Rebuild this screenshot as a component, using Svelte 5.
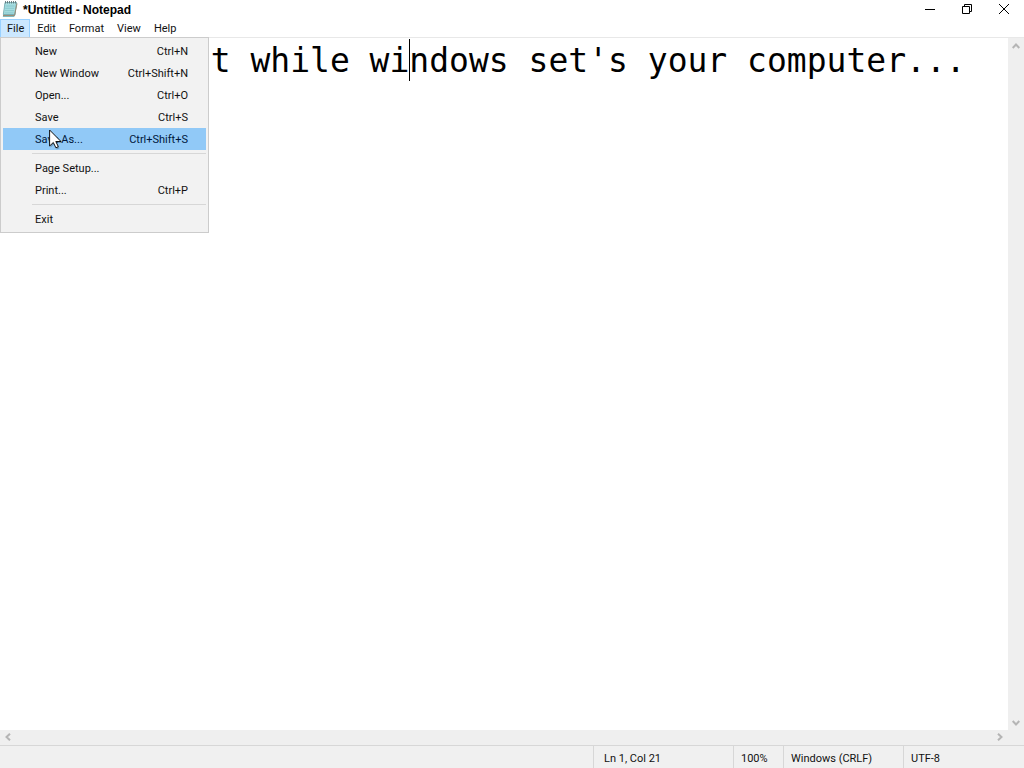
<script>
  const menus = ['File', 'Edit', 'Format', 'View', 'Help'];
  const groups = [
    [
      { label: 'New', keys: 'Ctrl+N' },
      { label: 'New Window', keys: 'Ctrl+Shift+N' },
      { label: 'Open...', keys: 'Ctrl+O' },
      { label: 'Save', keys: 'Ctrl+S' },
      { label: 'Save As...', keys: 'Ctrl+Shift+S' }
    ],
    [
      { label: 'Page Setup...', keys: '' },
      { label: 'Print...', keys: 'Ctrl+P' }
    ],
    [{ label: 'Exit', keys: '' }]
  ];
  let open = $state('File');
  let active = $state('Save As...');
  let text = $state("Please wait while windows set's your computer...");
  const column = 21;
</script>

<div class="window">
  <header class="title">
    <svg class="logo" width="16" height="18" viewBox="0 0 16 18" aria-hidden="true">
      <path d="M3 2.5h12l-1.600 12.500-1.400 2H.8z" fill="#80b9bd" />
      <path d="M3 2.500h11.500l-1.700 12H1.300z" fill="#a5dde0" stroke="#6da3aa" stroke-width=".7" />
      <path d="M1 15.500h11.500L15 3.500" fill="none" stroke="#9a8d78" stroke-width="1" />
      <path d="M3.500 6h9M3.200 8.300h9M2.900 10.600h9M2.600 12.900h9" stroke="#83c3ca" stroke-width=".8" />
      <path d="M3.500 1v2.500M5.500 1v2.500M7.500 1v2.500M9.500 1v2.500M11.500 1v2.500M13.500 1v2.500" stroke="#62777c" stroke-width=".9" />
    </svg>
    <h1>*Untitled - Notepad</h1>
    <div class="controls">
      <button aria-label="Minimize"><svg width="10" height="10" viewBox="0 0 10 10"><path d="M0 5.500h10" /></svg></button>
      <button aria-label="Restore"><svg width="10" height="10" viewBox="0 0 10 10"><path d="M.5 2.500h7v7h-7zM2.500 2.500v-2h7v7h-2" /></svg></button>
      <button aria-label="Close"><svg width="10" height="10" viewBox="0 0 10 10"><path d="M0 0l10 10M10 0L0 10" /></svg></button>
    </div>
  </header>

  <nav class="menubar">
    {#each menus as name}
      <div class="entry">
        <button class="top" class:open={open === name} onclick={() => (open = open === name ? '' : name)}>{name}</button>
        {#if name === 'File' && open === 'File'}
          <div class="menu" role="menu">
            {#each groups as group}
              <div class="group">
                {#each group as item}
                  <button class="item" class:active={active === item.label} role="menuitem" onmouseenter={() => (active = item.label)}>
                    <span>{item.label}</span><span>{item.keys}</span>
                  </button>
                {/each}
              </div>
            {/each}
            <svg class="pointer" width="14" height="22" viewBox="0 0 14 22" aria-hidden="true">
              <path d="M1.500 2.500v16l3.700-3.400 2.600 5.400 2.700-1.300-2.500-5.200h5z" fill="#000" opacity=".25" />
              <path d="M.6 1v16l3.700-3.500 2.600 5.300 2.400-1.200-2.500-5.100h5.200z" fill="#fff" stroke="#111" stroke-width="1" />
            </svg>
          </div>
        {/if}
      </div>
    {/each}
  </nav>

  <main>
    <div class="editor">
      <textarea aria-label="Text editor" wrap="off" spellcheck="false" bind:value={text}></textarea>
      <span class="caret" style="left: calc(12px + {column - 1}ch)"></span>
    </div>
    <div class="bar vertical">
      <button aria-label="Scroll up"><svg width="8" height="6" viewBox="0 0 8 6"><path d="M.7 5L4 1.500 7.300 5" /></svg></button>
      <button aria-label="Scroll down"><svg width="8" height="6" viewBox="0 0 8 6"><path d="M.7 1L4 4.500 7.300 1" /></svg></button>
    </div>
    <div class="bar horizontal">
      <button aria-label="Scroll left"><svg width="6" height="8" viewBox="0 0 6 8"><path d="M5 .7L1.500 4 5 7.300" /></svg></button>
      <button aria-label="Scroll right"><svg width="6" height="8" viewBox="0 0 6 8"><path d="M1 .7L4.500 4 1 7.300" /></svg></button>
    </div>
  </main>

  <footer>
    <span></span>
    <span class="position">Ln 1, Col {column}</span>
    <span>100%</span>
    <span>Windows (CRLF)</span>
    <span>UTF-8</span>
  </footer>
</div>

<style>
  :global(body) { margin: 0; }
  .window {
    display: flex;
    flex-direction: column;
    height: 100vh;
    background: #fff;
    color: #111;
    font: 11px/16px Roboto, Arial, sans-serif;
  }
  button {
    border: 0;
    padding: 0;
    margin: 0;
    background: none;
    font: inherit;
    color: inherit;
  }
  svg { display: block; }
  .title { display: flex; align-items: flex-start; height: 19px; padding: 0 2px; }
  .logo { margin-right: 5px; }
  h1 { margin: 0; flex: 1; font: 700 12px/20px "Liberation Sans", Arial, sans-serif; color: #000; }
  .controls { display: flex; }
  .controls button { width: 37px; height: 17px; display: grid; place-items: center; }
  .controls path { fill: none; stroke: #000; stroke-width: 1; }
  .menubar { display: flex; height: 18px; border-bottom: 1px solid #e8e8e8; }
  .entry { position: relative; }
  .top { height: 18px; padding: 1px 5px 0 6px; border: 1px solid transparent; border-width: 1px 1px 0; line-height: 16px; }
  .top.open { background: #cce8ff; border-color: #99d1ff; }
  .menu {
    position: absolute;
    z-index: 2;
    top: 18px;
    left: 0;
    box-sizing: border-box;
    width: 209px;
    padding: 2px;
    border: 1px solid #ccc;
    background: #f2f2f2;
  }
  .group + .group { margin-top: 3px; padding-top: 3px; position: relative; }
  .group + .group::before { content: ""; display: block; height: 1px; margin-left: 29px; background: #d7d7d7; margin-bottom: 3px; margin-top: -3px; }
  .item { display: flex; justify-content: space-between; align-items: center; width: 100%; height: 22px; padding: 2px 18px 0 32px; }
  .item.active { background: #91c9f7; color: #00183c; }
  .pointer { position: absolute; left: 48px; top: 91px; }
  main { flex: 1; min-height: 0; display: grid; grid-template: 1fr 15px / 1fr 16px; }
  .editor { position: relative; font: 33px/40px "DejaVu Sans Mono", monospace; }
  textarea {
    display: block;
    box-sizing: border-box;
    width: 100%;
    height: 100%;
    padding: 3px 0 0 12px;
    border: 0;
    outline: 0;
    resize: none;
    overflow: hidden;
    background: #fff;
    color: #000;
    font: inherit;
  }
  .caret { position: absolute; top: 1px; width: 1px; height: 42px; background: #000; }
  .bar { display: flex; justify-content: space-between; background: #efefef; }
  .bar button { width: 15px; height: 15px; display: grid; place-items: center; }
  .bar path { fill: none; stroke: #b5b5b5; stroke-width: 2; }
  .vertical { flex-direction: column; }
  .horizontal { grid-column: 1 / -1; padding-right: 17px; }
  .horizontal button { height: 13px; }
  footer {
    display: grid;
    grid-template-columns: 1fr 140px 50px 120px 121px;
    height: 22px;
    border-top: 1px solid #d7d7d7;
    background: #f0f0f0;
    line-height: 25px;
    overflow: hidden;
  }
  footer span + span { border-left: 1px solid #d7d7d7; padding-left: 7px; }
  footer .position { padding-left: 10px; }
</style>
